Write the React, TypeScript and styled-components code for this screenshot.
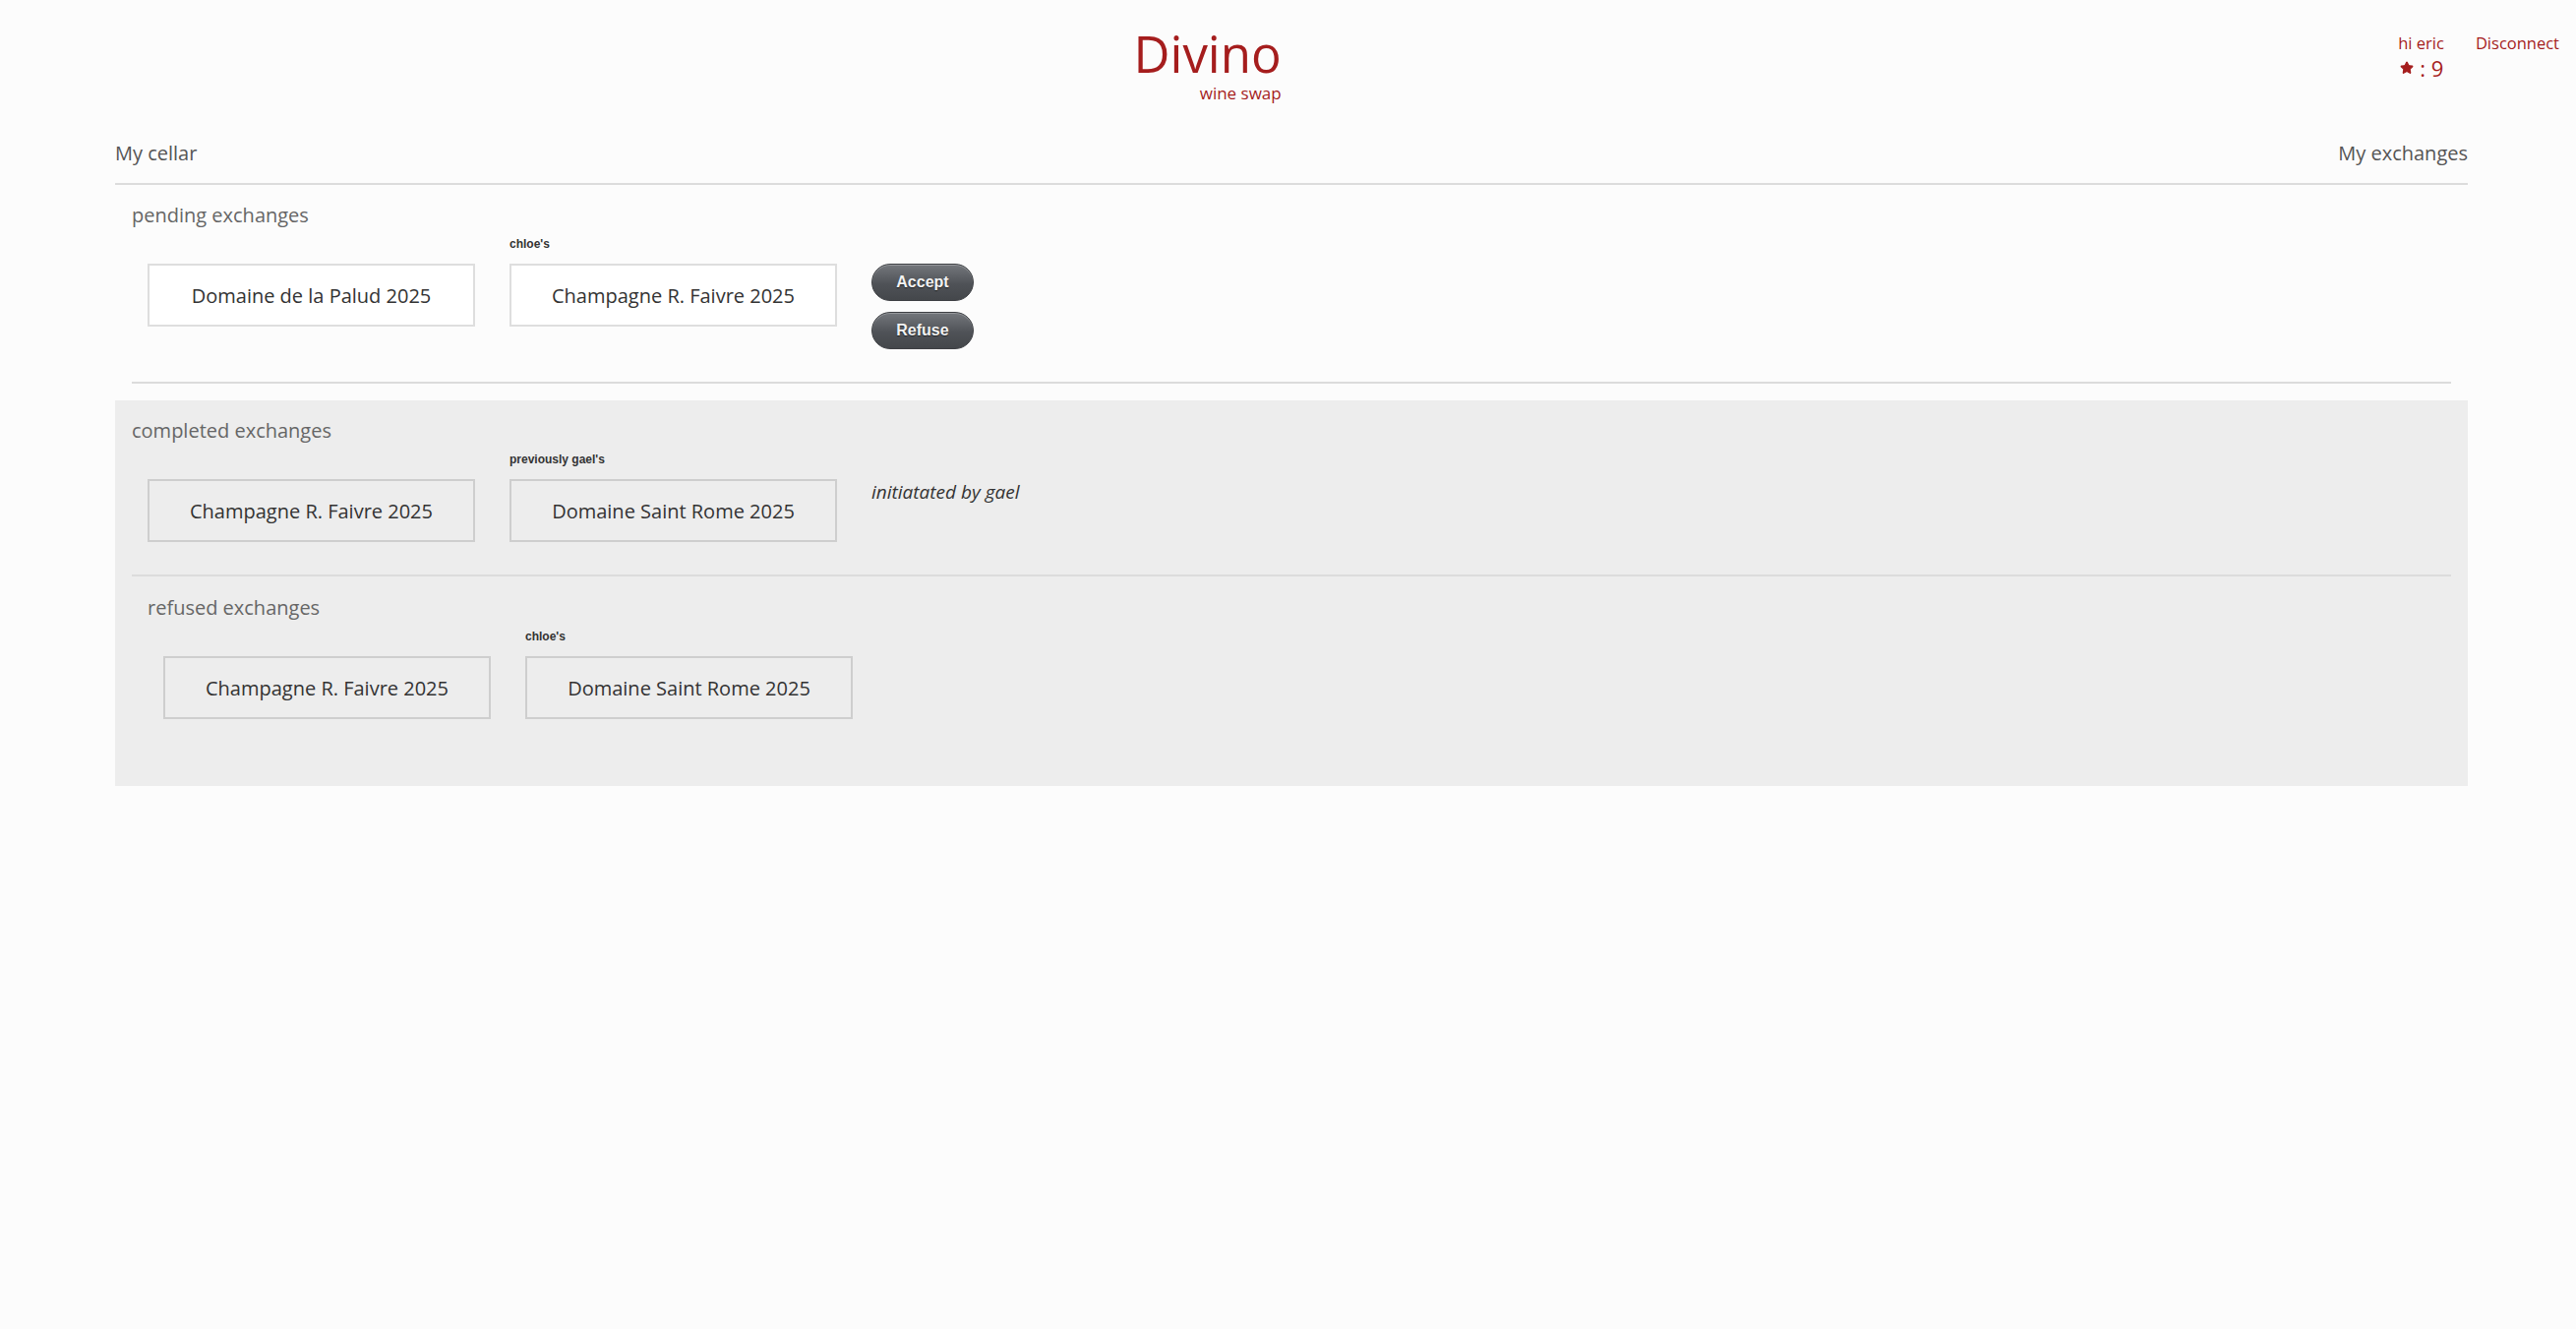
import styled, { createGlobalStyle } from "styled-components";
import { Star } from "lucide-react";

const GlobalStyle = createGlobalStyle`
  * {
    box-sizing: border-box;
  }
  body {
    margin: 0;
    background: #fcfcfc;
    font-family: "Open Sans", "Noto Sans", sans-serif;
    color: #333;
  }
`;

const RED = "#a51d1d";

type Wine = { name: string; owner?: string };

type Exchange = {
  mine: Wine;
  theirs: Wine;
  note?: string;
};

const pending: Exchange[] = [
  {
    mine: { name: "Domaine de la Palud 2025" },
    theirs: { name: "Champagne R. Faivre 2025", owner: "chloe's" },
  },
];

const completed: Exchange[] = [
  {
    mine: { name: "Champagne R. Faivre 2025" },
    theirs: { name: "Domaine Saint Rome 2025", owner: "previously gael's" },
    note: "initiatated by gael",
  },
];

const refused: Exchange[] = [
  {
    mine: { name: "Champagne R. Faivre 2025" },
    theirs: { name: "Domaine Saint Rome 2025", owner: "chloe's" },
  },
];

const Header = styled.header`
  display: flex;
  justify-content: space-between;
  align-items: flex-start;
  padding: 25px 17px 0 17px;
`;

const Spacer = styled.div`
  width: 0;
`;

const Logo = styled.div`
  display: flex;
  flex-direction: column;
  align-items: flex-end;
  color: ${RED};
`;

const Title = styled.h1`
  margin: 0;
  font-size: 51px;
  font-weight: 400;
  line-height: 1.14;
`;

const Tagline = styled.span`
  margin-top: 2px;
  font-size: 17px;
  line-height: 20px;
`;

const UserBox = styled.div`
  display: flex;
  gap: 32px;
  margin-top: 7px;
  color: ${RED};
  font-size: 16.5px;
`;

const UserInfo = styled.div`
  display: flex;
  flex-direction: column;
`;

const Points = styled.div`
  display: flex;
  align-items: center;
  gap: 6px;
  padding-left: 2px;
  font-size: 22px;
  line-height: 28px;
`;

const LinkButton = styled.a`
  color: ${RED};
  cursor: pointer;
`;

const Main = styled.main`
  margin: 37px 110px 0 117px;
`;

const Nav = styled.nav`
  display: flex;
  justify-content: space-between;
  padding-bottom: 17px;
  border-bottom: 2px solid #dcdcdc;
  font-size: 20px;
  color: #555;
`;

const Section = styled.section<{ $shade?: boolean; $nested?: boolean }>`
  padding: ${(p) => (p.$nested ? "18px 0 18px 16px" : "17px 17px 17px 17px")};
  background: ${(p) => (p.$shade ? "#ededed" : "transparent")};
`;

const Heading = styled.h2`
  margin: 0 0 6px 0;
  font-size: 20px;
  font-weight: 400;
  line-height: normal;
  color: #666;
`;

const Row = styled.div`
  display: flex;
  gap: 35px;
  padding-left: 16px;
  margin-bottom: 33px;
`;

const CardColumn = styled.div`
  display: flex;
  flex-direction: column;
`;

const Owner = styled.div`
  height: 20px;
  margin-bottom: 10px;
  font-family: "Liberation Sans", Arial, sans-serif;
  font-size: 12px;
  font-weight: 700;
  line-height: 20px;
  color: #333;
`;

const Card = styled.div<{ $shade?: boolean }>`
  width: 333px;
  height: 64px;
  display: flex;
  align-items: center;
  justify-content: center;
  border: 2px solid rgba(0, 0, 0, 0.13);
  background: ${(p) => (p.$shade ? "transparent" : "#fff")};
  font-size: 20px;
  color: #333;
`;

const Actions = styled.div`
  display: flex;
  flex-direction: column;
  gap: 11px;
  padding-top: 30px;
`;

const Button = styled.button`
  width: 104px;
  height: 38px;
  border-radius: 19px;
  border: 1px solid #3e4044;
  background: linear-gradient(#74777c, #4f5257 55%, #44474b);
  box-shadow: inset 0 1px 0 rgba(255, 255, 255, 0.25);
  color: #f2f2f2;
  font-family: "Liberation Sans", Arial, sans-serif;
  font-size: 16px;
  font-weight: 700;
  text-shadow: 0 1px 1px rgba(0, 0, 0, 0.6);
  cursor: pointer;
`;

const Note = styled.em`
  display: block;
  font-size: 19px;
  color: #333;
`;

const Divider = styled.hr`
  margin: 0;
  border: none;
  border-top: 2px solid #dcdcdc;
`;

function ExchangeRow({
  exchange,
  shade,
  actions,
}: {
  exchange: Exchange;
  shade?: boolean;
  actions?: boolean;
}) {
  return (
    <Row>
      {[exchange.mine, exchange.theirs].map((w, i) => (
        <CardColumn key={i}>
          <Owner>{w.owner ?? ""}</Owner>
          <Card $shade={shade}>{w.name}</Card>
        </CardColumn>
      ))}
      {actions && (
        <Actions>
          <Button>Accept</Button>
          <Button>Refuse</Button>
        </Actions>
      )}
      {exchange.note && (
        <Actions>
          <Note>{exchange.note}</Note>
        </Actions>
      )}
    </Row>
  );
}

export default function App() {
  return (
    <>
      <GlobalStyle />
      <Header>
        <Spacer />
        <Logo>
          <Title>Divino</Title>
          <Tagline>wine swap</Tagline>
        </Logo>
        <UserBox>
          <UserInfo>
            <span>hi eric</span>
            <Points>
              <Star size={14} fill={RED} strokeWidth={2} />
              <span>: 9</span>
            </Points>
          </UserInfo>
          <LinkButton>Disconnect</LinkButton>
        </UserBox>
      </Header>
      <Main>
        <Nav>
          <span>My cellar</span>
          <span>My exchanges</span>
        </Nav>
        <Section>
          <Heading>pending exchanges</Heading>
          {pending.map((e, i) => (
            <ExchangeRow key={i} exchange={e} actions />
          ))}
          <Divider />
        </Section>
        <Section $shade>
          <Heading>completed exchanges</Heading>
          {completed.map((e, i) => (
            <ExchangeRow key={i} exchange={e} shade />
          ))}
          <Divider />
          <Section $nested>
            <Heading>refused exchanges</Heading>
            {refused.map((e, i) => (
              <ExchangeRow key={i} exchange={e} shade />
            ))}
          </Section>
        </Section>
      </Main>
    </>
  );
}
